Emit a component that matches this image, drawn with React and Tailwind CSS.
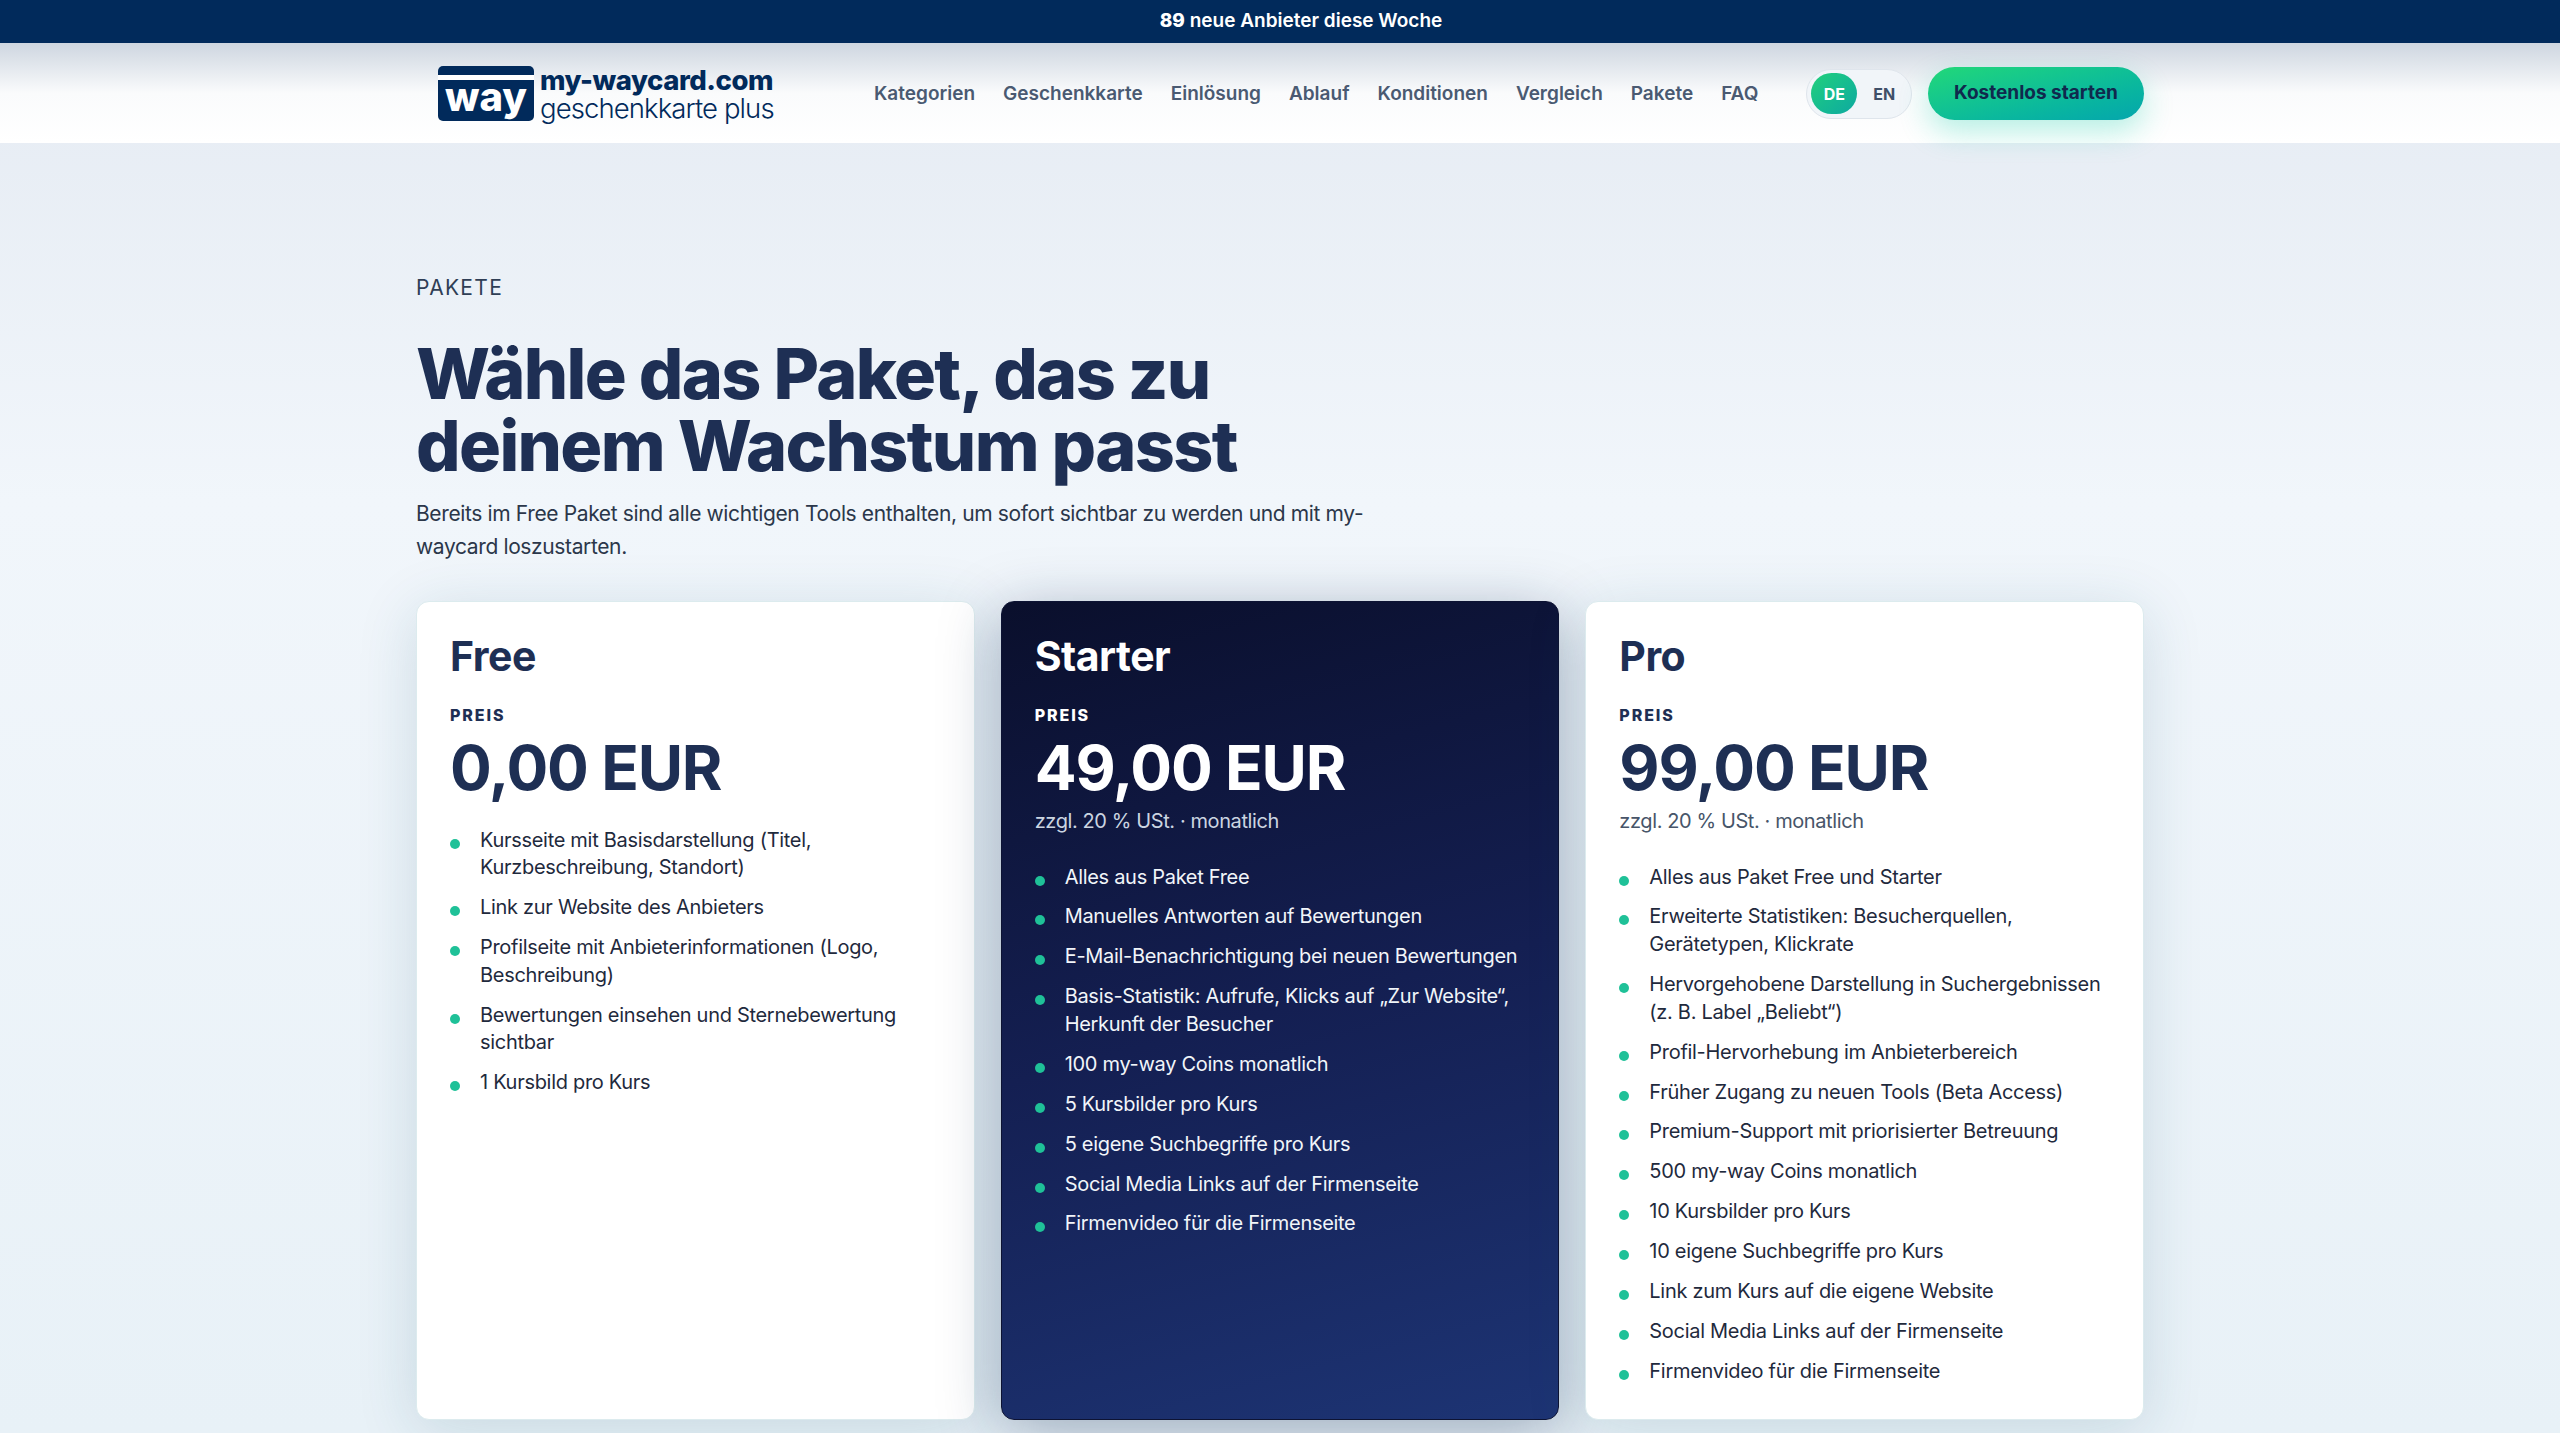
const freeItems = [
  ['Kursseite mit Basisdarstellung (Titel,', 'Kurzbeschreibung, Standort)'],
  ['Link zur Website des Anbieters'],
  ['Profilseite mit Anbieterinformationen (Logo,', 'Beschreibung)'],
  ['Bewertungen einsehen und Sternebewertung', 'sichtbar'],
  ['1 Kursbild pro Kurs'],
];

const starterItems = [
  ['Alles aus Paket Free'],
  ['Manuelles Antworten auf Bewertungen'],
  ['E-Mail-Benachrichtigung bei neuen Bewertungen'],
  ['Basis-Statistik: Aufrufe, Klicks auf „Zur Website“,', 'Herkunft der Besucher'],
  ['100 my-way Coins monatlich'],
  ['5 Kursbilder pro Kurs'],
  ['5 eigene Suchbegriffe pro Kurs'],
  ['Social Media Links auf der Firmenseite'],
  ['Firmenvideo für die Firmenseite'],
];

const proItems = [
  ['Alles aus Paket Free und Starter'],
  ['Erweiterte Statistiken: Besucherquellen,', 'Gerätetypen, Klickrate'],
  ['Hervorgehobene Darstellung in Suchergebnissen', '(z. B. Label „Beliebt“)'],
  ['Profil-Hervorhebung im Anbieterbereich'],
  ['Früher Zugang zu neuen Tools (Beta Access)'],
  ['Premium-Support mit priorisierter Betreuung'],
  ['500 my-way Coins monatlich'],
  ['10 Kursbilder pro Kurs'],
  ['10 eigene Suchbegriffe pro Kurs'],
  ['Link zum Kurs auf die eigene Website'],
  ['Social Media Links auf der Firmenseite'],
  ['Firmenvideo für die Firmenseite'],
];

const navLinks = ['Kategorien', 'Geschenkkarte', 'Einlösung', 'Ablauf', 'Konditionen', 'Vergleich', 'Pakete', 'FAQ'];

function Logo() {
  return (
    <div className="w-[334px] flex items-center gap-[6px] whitespace-nowrap">
      <div className="w-[96px] h-[55px] rounded-[5px] bg-[#012a5b] flex flex-col shrink-0">
        <div className="h-[9px] shrink-0" />
        <div className="h-[5px] shrink-0 bg-white" />
        <div className="flex-1 flex items-start justify-center text-white text-[40px] font-extrabold leading-[34px]">way</div>
      </div>
      <div className="flex flex-col text-[#012a5b]">
        <span className="text-[27.5px] leading-[28px] font-extrabold tracking-[-0.45px]">my-waycard.com</span>
        <span className="text-[27.5px] leading-[28px] font-light tracking-[-0.9px]">geschenkkarte plus</span>
      </div>
    </div>
  );
}

function PlanCard({ name, price, note, items, dark }) {
  return (
    <div
      className={`rounded-[13px] pl-[33px] pr-[33px] pt-[29px] pb-[33px] border ${
        dark
          ? 'border-[#0d1333] bg-[linear-gradient(165deg,#0a0f2c,#141f52_50%,#1d3474)] text-white shadow-[0_12px_60px_rgba(15,40,80,0.35)]'
          : 'border-[#dcebee] bg-white text-[#1e2f54] shadow-[0_10px_60px_rgba(25,85,115,0.16)]'
      }`}
    >
      <h3 className="text-[41px] leading-[50px] font-bold tracking-[-0.5px]">{name}</h3>
      <p className="mt-[24px] text-[16px] leading-[20px] font-extrabold tracking-[1.9px]">PREIS</p>
      <p className="mt-[9px] text-[62px] leading-[68px] font-bold tracking-[-1.2px]">{price}</p>
      {note && (
        <p className={`mt-[5px] text-[20px] leading-[28px] tracking-[-0.4px] ${dark ? 'text-[#cbd5e1]' : 'text-[#475569]'}`}>{note}</p>
      )}
      <ul className={`flex flex-col gap-[12.2px] ${note ? 'mt-[29px]' : 'mt-[25px]'}`}>
        {items.map((lines) => (
          <li key={lines[0]} className="flex">
            <span className="w-[10px] h-[10px] rounded-full bg-[#1fc198] mt-[12px] mr-[20px] shrink-0" />
            <span className={`text-[20px] leading-[27.7px] tracking-[-0.3px] ${dark ? 'text-[#f1f5f9]' : 'text-[#1f2a3d]'}`}>
              {lines.map((line) => (
                <span key={line} className="block whitespace-nowrap">{line}</span>
              ))}
            </span>
          </li>
        ))}
      </ul>
    </div>
  );
}

export default function App() {
  return (
    <div className="w-[2560px] h-[1440px] overflow-hidden bg-white font-['Inter',sans-serif]">
      <div className="h-[1433px] overflow-hidden bg-gradient-to-b from-[#e4eaf2] via-[#f1f6fb] via-35% to-[#e8f1f7]">
        {/* Top bar */}
        <div className="h-[43px] bg-[#012a5b] flex items-center justify-center pl-[42px] text-white text-[19px] font-semibold">
          <span><b className="font-extrabold">89</b> neue Anbieter diese Woche</span>
        </div>

        {/* Nav */}
        <header className="h-[100px] bg-gradient-to-b from-[#ced6e0] via-[#fafbfc] to-white">
          <div className="w-[1728px] mx-auto h-full flex items-center pl-[22px] pt-[1px]">
            <Logo />
            <nav className="ml-[102px] mt-[1px] flex gap-[28px] text-[19px] font-semibold text-[#4a5a72]">
              {navLinks.map((l) => (
                <a key={l}>{l}</a>
              ))}
            </nav>
            <div className="ml-[48px] w-[106px] h-[50px] rounded-full bg-[#f1f5f9] border border-[#dfe5ec] flex items-center p-[4px] text-[16px] font-bold">
              <span className="w-[46px] h-[41px] rounded-full bg-gradient-to-br from-[#22d07a] to-[#0fa9a0] text-white flex items-center justify-center">DE</span>
              <span className="flex-1 pl-[4px] text-center text-[#3f4f68]">EN</span>
            </div>
            <button className="ml-[16px] w-[217px] h-[53px] rounded-full bg-gradient-to-br from-[#22d877] to-[#06a5ad] text-[#10294d] text-[19px] font-bold shadow-[0_12px_30px_rgba(20,210,170,0.3)]">
              Kostenlos starten
            </button>
          </div>
        </header>

        {/* Pakete */}
        <main className="w-[1728px] mx-auto pt-[130px]">
          <p className="text-[21px] leading-[29px] tracking-[1.3px] text-[#2f3e55]">PAKETE</p>
          <h1 className="mt-[36px] text-[70px] leading-[72px] font-extrabold tracking-[-1.65px] text-[#1e2f54]">
            Wähle das Paket, das zu
            <br />
            deinem Wachstum passt
          </h1>
          <p className="mt-[15px] text-[21px] leading-[33.3px] tracking-[-0.37px] text-[#2b374a]">
            Bereits im Free Paket sind alle wichtigen Tools enthalten, um sofort sichtbar zu werden und mit my-
            <br />
            waycard loszustarten.
          </p>
          <div className="mt-[37px] grid grid-cols-3 gap-[26px] h-[817px]">
            <PlanCard name="Free" price="0,00 EUR" items={freeItems} />
            <PlanCard name="Starter" price="49,00 EUR" note="zzgl. 20 % USt. · monatlich" items={starterItems} dark />
            <PlanCard name="Pro" price="99,00 EUR" note="zzgl. 20 % USt. · monatlich" items={proItems} />
          </div>
        </main>
      </div>
    </div>
  );
}
